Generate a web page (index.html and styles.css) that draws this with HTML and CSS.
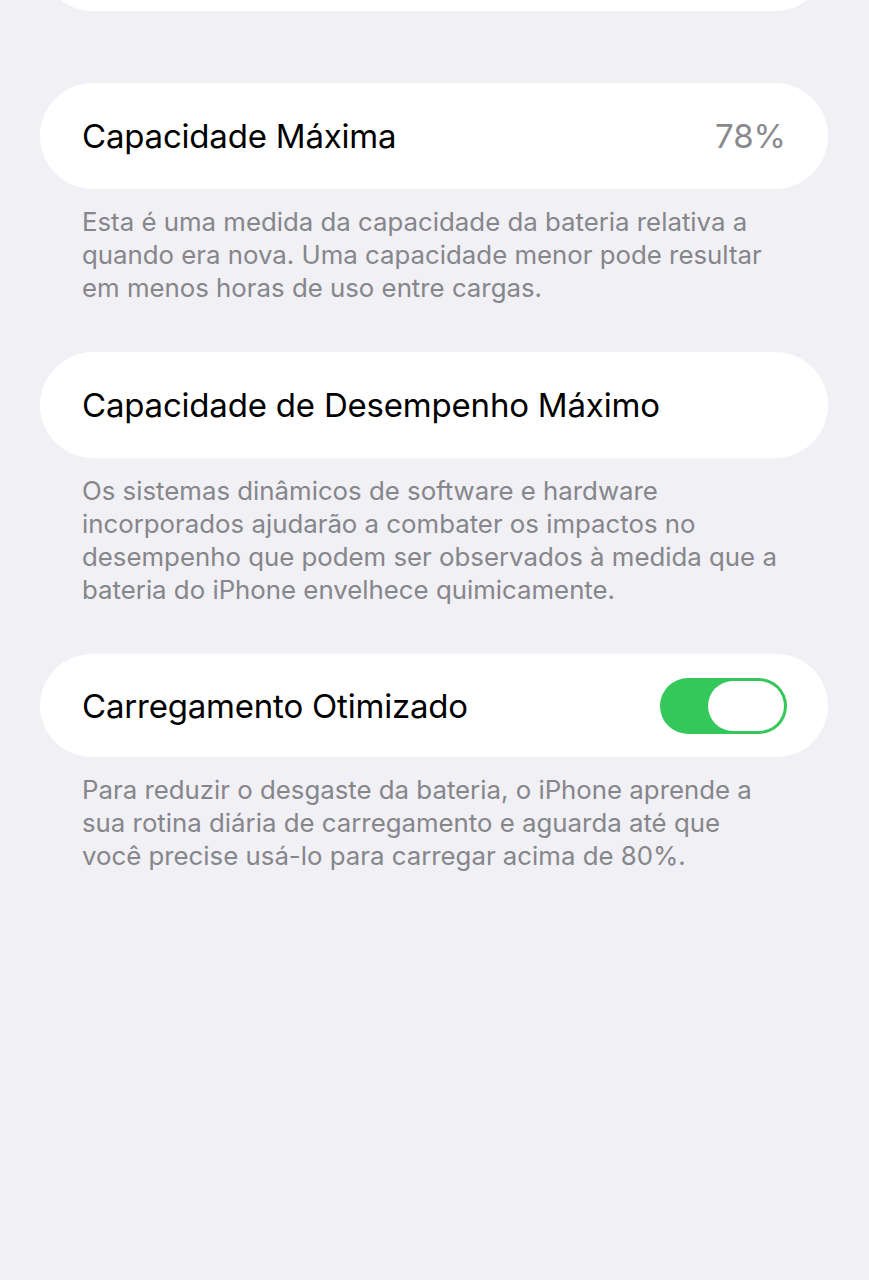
FILE: index.html
```html
<!DOCTYPE html>
<html lang="pt-BR">
<head>
    <meta charset="UTF-8">
    <meta name="viewport" content="width=device-width, initial-scale=1.0">
    <title>Saúde da Bateria</title>
    <link rel="stylesheet" href="styles.css">
</head>
<body>
    <div class="settings">
        <!-- previous group, scrolled out of view -->
        <div class="group group-top">
            <div class="cell cell-cut"></div>
        </div>

        <div class="group">
            <div class="cell">
                <span class="cell-title">Capacidade Máxima</span>
                <span class="cell-value">78%</span>
            </div>
            <p class="group-note">Esta é uma medida da capacidade da bateria relativa a quando era nova. Uma capacidade menor pode resultar em menos horas de uso entre cargas.</p>
        </div>

        <div class="group">
            <div class="cell">
                <span class="cell-title">Capacidade de Desempenho Máximo</span>
            </div>
            <p class="group-note">Os sistemas dinâmicos de software e hardware incorporados ajudarão a combater os impactos no desempenho que podem ser observados à medida que a bateria do iPhone envelhece quimicamente.</p>
        </div>

        <div class="group">
            <div class="cell cell-short">
                <span class="cell-title">Carregamento Otimizado</span>
                <span class="switch switch-on"><span class="switch-knob"></span></span>
            </div>
            <p class="group-note">Para reduzir o desgaste da bateria, o iPhone aprende a sua rotina diária de carregamento e aguarda até que você precise usá-lo para carregar acima de 80%.</p>
        </div>
    </div>
</body>
</html>
```

FILE: styles.css
```css
body {
    margin: 0;
    padding: 0;
    background-color: #f0f0f5;
    font-family: Inter, "Noto Sans", sans-serif;
    -webkit-font-smoothing: antialiased;
}

.settings {
    padding: 0 41px 0 40px;
}

.group {
    margin-bottom: 48px;
}

.group-top {
    margin-bottom: 72px;
}

/* Cells */
.cell {
    display: flex;
    align-items: center;
    justify-content: space-between;
    height: 106px;
    padding: 0 42px;
    background-color: #fff;
    border-radius: 53px;
}

.cell-cut {
    margin-top: -95px;
}

.cell-short {
    height: 103px;
}

.cell-title {
    font-size: 33px;
    color: #000;
    letter-spacing: -0.2px;
}

.cell-value {
    font-size: 33px;
    color: #8a8a8e;
}

/* Footer notes */
.group-note {
    margin: 16px 0 0;
    padding: 0 42px;
    font-size: 25.8px;
    line-height: 33px;
    color: #86868b;
}

/* Toggle switch */
.switch {
    position: relative;
    display: block;
    width: 127px;
    height: 56px;
    margin-right: -1px;
    border-radius: 28px;
    background-color: #34c759;
}

.switch-knob {
    position: absolute;
    top: 3px;
    right: 3px;
    width: 76px;
    height: 50px;
    border-radius: 25px;
    background-color: #fff;
}
```
